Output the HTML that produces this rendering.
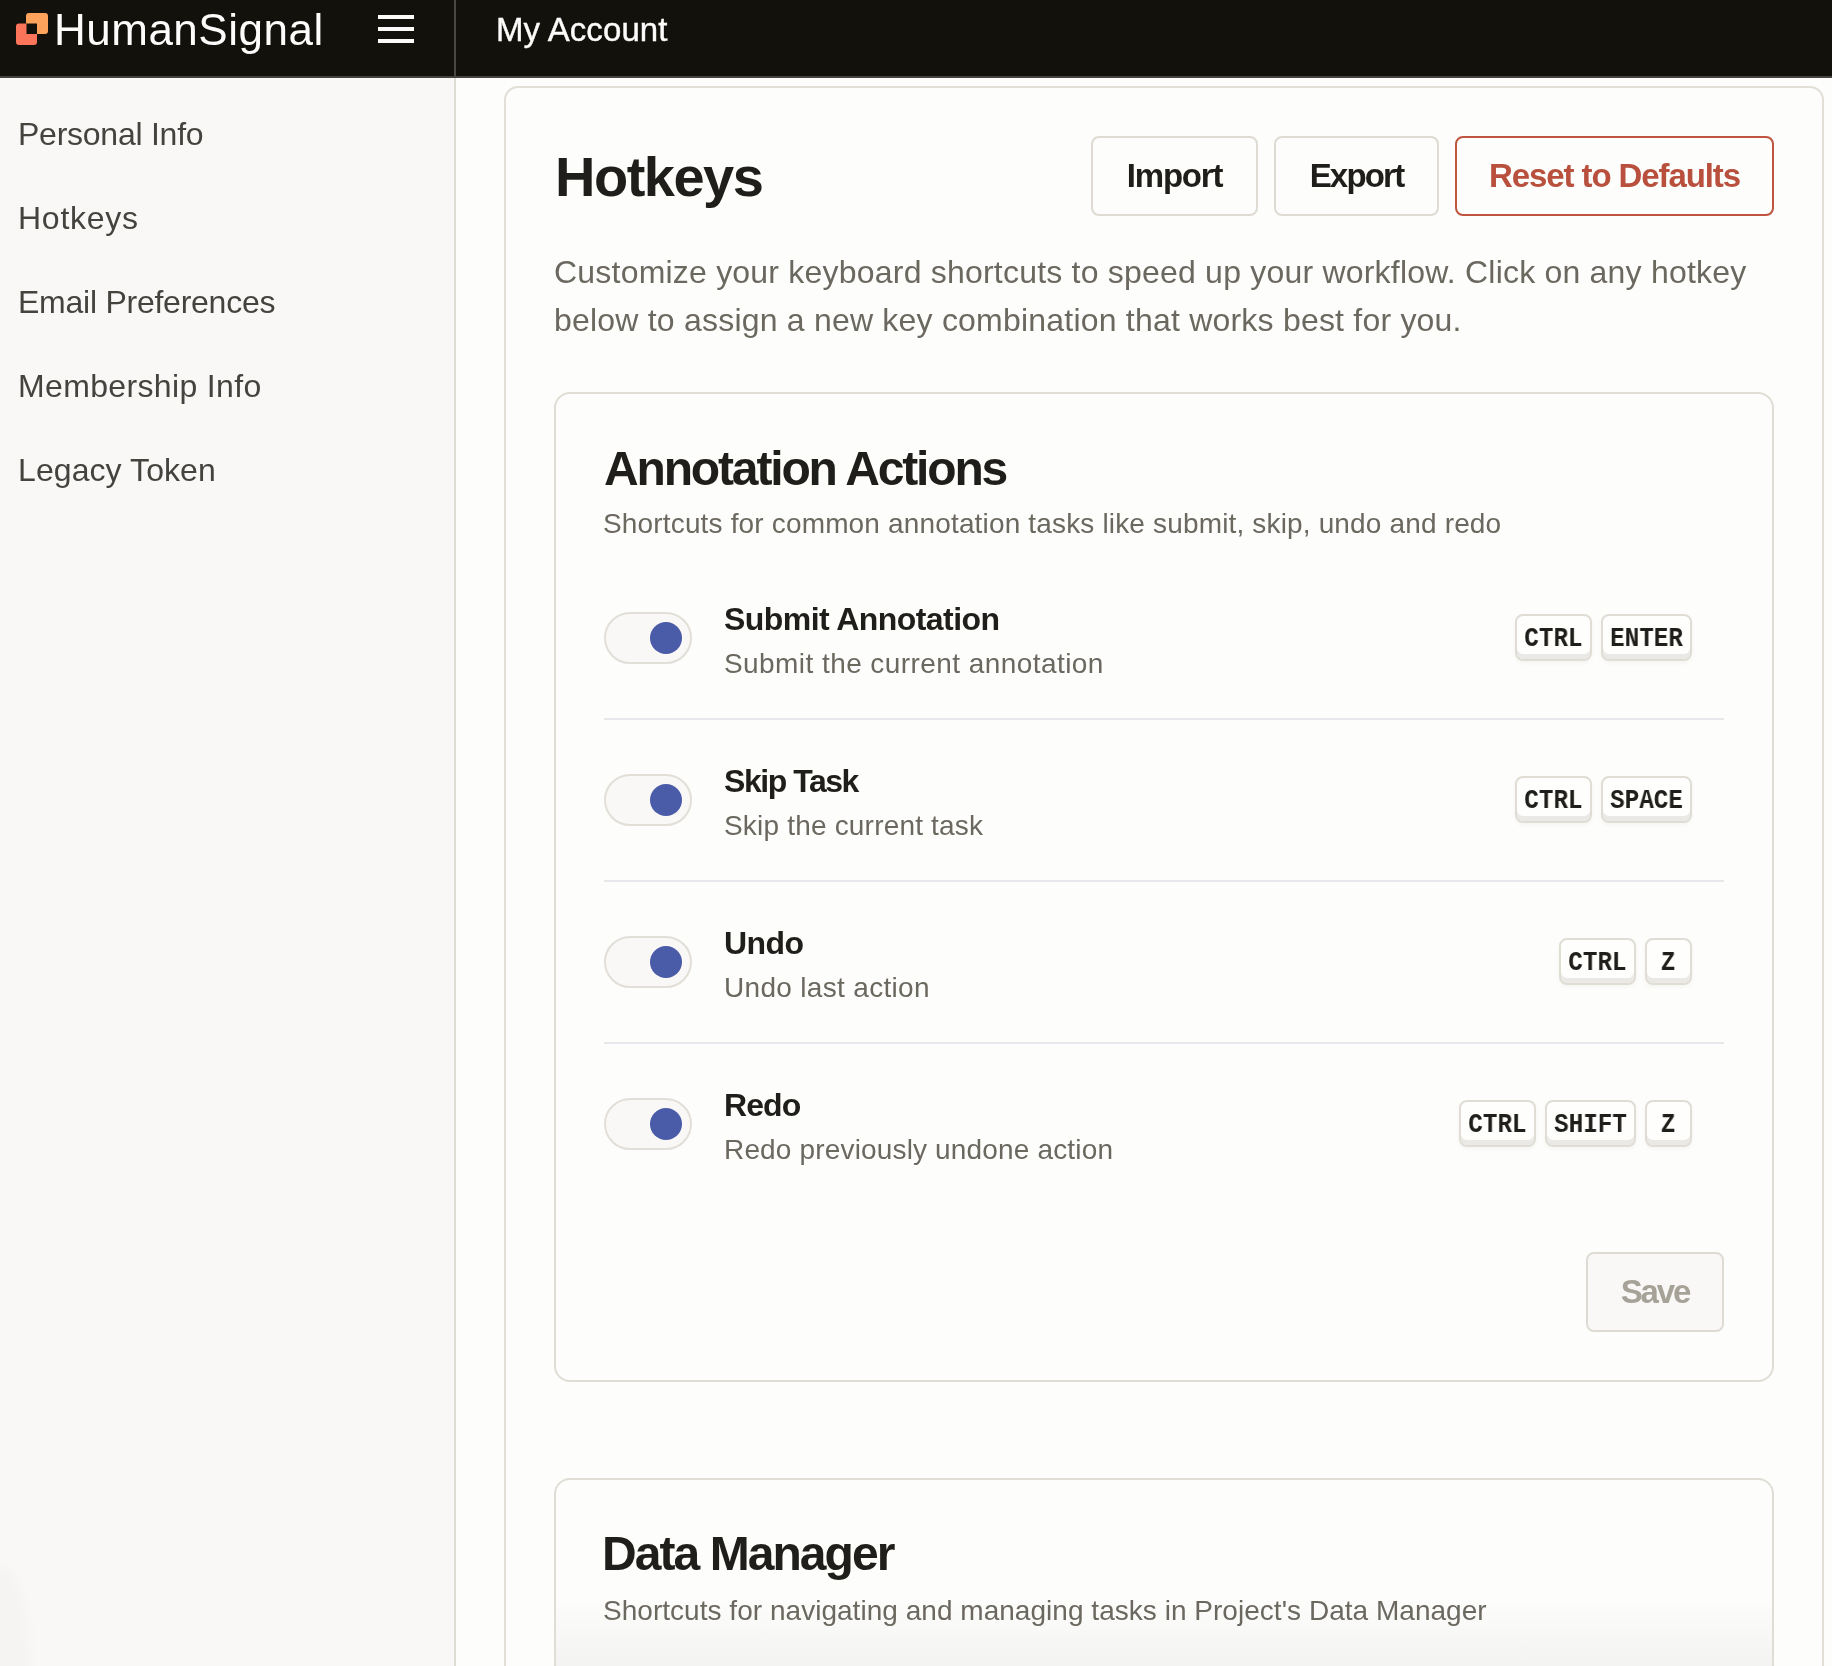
<!DOCTYPE html>
<html>
<head>
<meta charset="utf-8">
<style>
html,body{margin:0;padding:0;}
body{width:1832px;height:1666px;overflow:hidden;position:relative;background:#FDFDFB;font-family:"Liberation Sans",sans-serif;}
.abs{position:absolute;}
.t,.nav,.btn span,#desc,.h2,.sub,.rt,.rd,.key span{will-change:transform;}
.t{position:absolute;white-space:nowrap;line-height:1;}
#header{left:0;top:0;width:1832px;height:76px;background:#12110C;border-bottom:2px solid #45433E;}
#brand{left:54px;top:8px;font-size:44px;letter-spacing:0.5px;color:#FDFCFA;}
.bar{position:absolute;left:378px;width:36px;height:4px;background:#FDFCFA;}
#hdiv{left:454px;top:0;width:2px;height:76px;background:#4A4843;}
#myacc{left:496px;top:13px;font-size:33px;letter-spacing:0.1px;-webkit-text-stroke:0.4px #FDFCFA;color:#FDFCFA;}
#sidebar{left:0;top:78px;width:454px;height:1588px;background:#F9F8F6;border-right:2px solid #DEDCD5;}
.nav{position:absolute;left:18px;font-size:32px;letter-spacing:-0.25px;color:#45433E;white-space:nowrap;line-height:1;}
#outer{left:504px;top:86px;width:1316px;height:1700px;border:2px solid #E2DFD8;border-radius:14px;background:#FDFDFB;}
#title{left:555px;top:148.6px;font-size:56px;letter-spacing:-1.5px;font-weight:700;color:#1F1E1A;}
.btn{position:absolute;top:136px;height:76px;border:2px solid #DEDBD3;border-radius:8px;background:#FDFDFB;box-sizing:content-box;}
.btn span{position:absolute;left:0;right:0;text-align:center;top:21px;font-size:33px;font-weight:700;line-height:1;color:#1F1E1A;white-space:nowrap;}
#desc{left:554px;top:248px;font-size:32px;letter-spacing:0.21px;line-height:48px;color:#6B6860;white-space:nowrap;}
.card{position:absolute;left:554px;width:1216px;border:2px solid #E0DDD4;border-radius:16px;background:#FDFDFB;}
.h2{position:absolute;left:604px;font-size:48px;letter-spacing:-2.15px;font-weight:700;color:#1F1E1A;white-space:nowrap;line-height:1;}
.sub{position:absolute;left:603px;font-size:28px;letter-spacing:0.16px;color:#6B6860;white-space:nowrap;line-height:1;}
.toggle{position:absolute;left:604px;width:84px;height:48px;border:2px solid #E2DFD8;border-radius:26px;background:#F9F8F6;}
.knob{position:absolute;left:44px;top:8px;width:32px;height:32px;border-radius:50%;background:#4A5BA8;}
.rt{position:absolute;left:724px;font-size:32px;letter-spacing:-0.56px;font-weight:700;color:#1F1E1A;white-space:nowrap;line-height:1;}
.rd{position:absolute;left:724px;font-size:28px;letter-spacing:0.43px;color:#6B6860;white-space:nowrap;line-height:1;}
.sep{position:absolute;left:604px;width:1120px;height:2px;background:#E7E8EC;}
.keys{position:absolute;right:140px;height:47px;display:flex;gap:9px;}
.key span{display:inline-block;transform:scaleX(0.9);transform-origin:center;}
.key{box-sizing:border-box;height:47px;border:2px solid #E0DDD5;border-radius:8px;background:#FEFEFD;box-shadow:inset 0 -5px 0 #EAE9E6, 0 2px 4px rgba(0,0,0,0.04);font-family:"Liberation Mono",monospace;font-weight:700;font-size:27px;line-height:46px;text-align:center;color:#1F1E1A;}
</style>
</head>
<body>
<div id="header" class="abs"></div>
<svg class="abs" style="left:0;top:0" width="60" height="60" viewBox="0 0 60 60">
  <path d="M29 13 H45 Q48 13 48 16 V31 Q48 34 45 34 H37 V23.5 H26 V16 Q26 13 29 13 Z" fill="#FDA35C"/>
  <path d="M19 23.5 H26.5 V34 H37 V42 Q37 45 34 45 H19 Q16 45 16 42 V26.5 Q16 23.5 19 23.5 Z" fill="#FC7459"/>
</svg>
<div id="brand" class="t">HumanSignal</div>
<div class="bar" style="top:15px"></div>
<div class="bar" style="top:27px"></div>
<div class="bar" style="top:39px"></div>
<div id="hdiv" class="abs"></div>
<div id="myacc" class="t">My Account</div>

<div id="sidebar" class="abs"></div>
<div class="nav" style="top:118px">Personal Info</div>
<div class="nav" style="top:202px;letter-spacing:0.75px">Hotkeys</div>
<div class="nav" style="top:286px">Email Preferences</div>
<div class="nav" style="top:370px;letter-spacing:0.35px">Membership Info</div>
<div class="nav" style="top:454px;letter-spacing:0.08px">Legacy Token</div>

<div id="outer" class="abs"></div>
<div id="title" class="t">Hotkeys</div>
<div class="btn" style="left:1091px;width:163px"><span style="letter-spacing:-1.2px">Import</span></div>
<div class="btn" style="left:1274px;width:161px"><span style="letter-spacing:-1.8px">Export</span></div>
<div class="btn" style="left:1455px;width:315px;border-color:#BF5440"><span style="color:#B8503D;letter-spacing:-1.1px">Reset to Defaults</span></div>
<div id="desc" class="abs">Customize your keyboard shortcuts to speed up your workflow. Click on any hotkey<br>below to assign a new key combination that works best for you.</div>

<div class="card" style="top:392px;height:986px"></div>
<div class="h2" style="top:445px">Annotation Actions</div>
<div class="sub" style="top:510px">Shortcuts for common annotation tasks like submit, skip, undo and redo</div>

<div class="toggle" style="top:612px"><div class="knob"></div></div>
<div class="rt" style="top:603px">Submit Annotation</div>
<div class="rd" style="top:650px">Submit the current annotation</div>
<div class="keys" style="top:614px"><div class="key" style="width:77px"><span>CTRL</span></div><div class="key" style="width:91px"><span>ENTER</span></div></div>
<div class="sep" style="top:718px"></div>

<div class="toggle" style="top:774px"><div class="knob"></div></div>
<div class="rt" style="top:765px;letter-spacing:-1.46px">Skip Task</div>
<div class="rd" style="top:812px;letter-spacing:0.19px">Skip the current task</div>
<div class="keys" style="top:776px"><div class="key" style="width:77px"><span>CTRL</span></div><div class="key" style="width:91px"><span>SPACE</span></div></div>
<div class="sep" style="top:880px"></div>

<div class="toggle" style="top:936px"><div class="knob"></div></div>
<div class="rt" style="top:927px">Undo</div>
<div class="rd" style="top:974px;letter-spacing:0.32px">Undo last action</div>
<div class="keys" style="top:938px"><div class="key" style="width:77px"><span>CTRL</span></div><div class="key" style="width:47px"><span>Z</span></div></div>
<div class="sep" style="top:1042px"></div>

<div class="toggle" style="top:1098px"><div class="knob"></div></div>
<div class="rt" style="top:1089px;letter-spacing:-0.9px">Redo</div>
<div class="rd" style="top:1136px;letter-spacing:0.16px">Redo previously undone action</div>
<div class="keys" style="top:1100px"><div class="key" style="width:77px"><span>CTRL</span></div><div class="key" style="width:91px"><span>SHIFT</span></div><div class="key" style="width:47px"><span>Z</span></div></div>

<div class="btn" style="left:1586px;top:1252px;width:134px;height:76px;background:#F9F8F6"><span style="color:#A6A298;letter-spacing:-2.1px">Save</span></div>

<div class="card" style="top:1478px;height:401px;background:linear-gradient(to bottom,#FDFDFB 0px,#FDFDFB 116px,#F3F3F2 188px)"></div>
<div class="h2" style="top:1530px;left:602px;letter-spacing:-1.95px">Data Manager</div>
<div class="sub" style="top:1597px;letter-spacing:0.03px">Shortcuts for navigating and managing tasks in Project's Data Manager</div>
<div class="abs" style="left:-32px;top:1565px;width:62px;height:200px;border-radius:50%;background:rgba(0,0,0,0.014);filter:blur(6px)"></div>
</body>
</html>
